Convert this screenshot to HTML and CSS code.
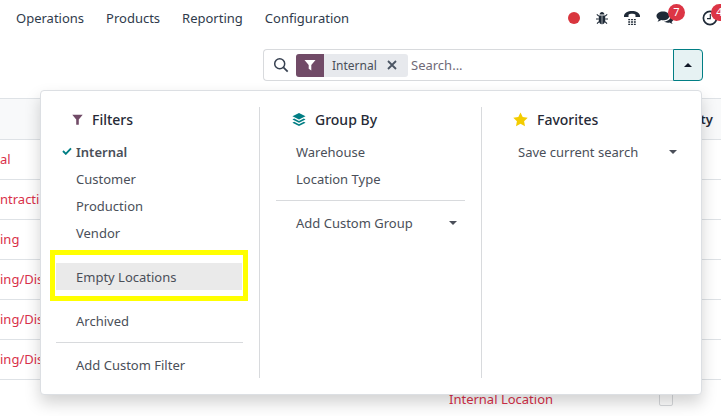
FILE: index.html
```html
<!DOCTYPE html>
<html lang="en">
<head>
<meta charset="utf-8">
<title>Locations</title>
<link rel="stylesheet" href="styles.css">
</head>
<body>
<header class="topbar">
  <nav class="menu">
    <a class="menu-item">Operations</a>
    <a class="menu-item">Products</a>
    <a class="menu-item">Reporting</a>
    <a class="menu-item">Configuration</a>
  </nav>
  <div class="systray">
    <span class="rec-dot"></span>
    <svg class="tray-icon bug" viewBox="0 0 14 14"><path d="M4.6 3.6C4.7 2 5.7 1 7 1s2.3 1 2.4 2.600z" fill="#1f2a37"/><path d="M3.800 4.400h6.400v5c0 2.200-1.400 3.800-3.200 3.800S3.800 11.600 3.800 9.400z" fill="#1f2a37"/><path d="M7 4.400v8.800" stroke="#fff" stroke-width=".6"/><path d="M3.800 5.200 1.800 3.400M10.200 5.200l2-1.800M3.800 8H1M10.200 8H13M4 10.600l-2 2M10 10.600l2 2" stroke="#1f2a37" stroke-width="1.100" fill="none"/></svg>
    <svg class="tray-icon phone" viewBox="0 0 18 17"><path d="M.5 6C1 3 4.500 1 9 1s8 2 8.500 5v1.500h-4.800V5C12 4.300 10.500 4 9 4s-3 .3-3.700 1v2.500H.5z" fill="#1f2a37"/><path d="M5 9.500h2V11H5zM8 9.500h2V11H8zM11 9.500h2V11h-2zM5 12h2v1.500H5zM8 12h2v1.500H8zM11 12h2v1.500h-2zM5 14.500h2V16H5zM8 14.500h2V16H8zM11 14.500h2V16h-2z" fill="#1f2a37"/></svg>
    <span class="tray-badged">
      <svg class="tray-icon comments" viewBox="0 0 18 16"><path d="M7 1.500c3.600 0 6.300 1.900 6.300 4.400S10.600 10.300 7 10.300c-.6 0-1.200 0-1.800-.2C4.200 11 3 11.500 1.500 11.700c.7-.8 1.100-1.500 1.200-2.400C1.300 8.400.5 7.200.5 5.900.5 3.400 3.400 1.500 7 1.500z" fill="#1f2a37"/><path d="M14.500 5c1.900.8 3 2.200 3 3.800 0 1.200-.7 2.300-1.900 3.100.2.800.5 1.400 1.100 2-1.300-.2-2.400-.6-3.300-1.300-.5.100-1 .2-1.500.2-1.500 0-2.900-.5-3.800-1.200 3.700-.1 6.500-2.400 6.500-5.300z" fill="#1f2a37"/></svg>
      <span class="badge badge-msg">7</span>
    </span>
    <span class="tray-badged">
      <svg class="tray-icon clock" viewBox="0 0 16 16"><circle cx="8" cy="8" r="6.600" fill="none" stroke="#1f2a37" stroke-width="1.700"/><path d="M8.300 4v4.600H5" fill="none" stroke="#1f2a37" stroke-width="1.100"/></svg>
      <span class="badge badge-act">4</span>
    </span>
  </div>
</header>

<section class="control-panel">
  <div class="search-group">
    <div class="search-box">
      <svg class="search-icon" viewBox="0 0 16 16"><circle cx="6.700" cy="6.700" r="5" fill="none" stroke="#374151" stroke-width="1.500"/><path d="m10.400 10.400 4.300 4.300" stroke="#374151" stroke-width="1.700"/></svg>
      <span class="facet">
        <span class="facet-icon"><svg viewBox="0 0 12 12"><path d="M.5 1h11L7.300 6v5.500L4.700 9.800V6z" fill="#fff"/></svg></span>
        <span class="facet-label">Internal</span>
        <svg class="facet-close" viewBox="0 0 10 10"><path d="m1 1 8 8M9 1 1 9" stroke="#4b5563" stroke-width="1.800"/></svg>
      </span>
      <span class="search-input">Search...</span>
    </div>
    <button class="toggle"><span class="caret-up"></span></button>
  </div>
</section>

<section class="table">
  <div class="row head"><span class="cell-end">ty</span></div>
  <div class="row"><span>al</span></div>
  <div class="row"><span>ntracting</span></div>
  <div class="row"><span>ing</span></div>
  <div class="row"><span>ing/Dispatch</span></div>
  <div class="row"><span>ing/Dispatch</span></div>
  <div class="row"><span>ing/Dispatch</span></div>
  <div class="row last"><span>Internal Location</span><i class="check"></i></div>
</section>

<div class="dropdown">
  <div class="col">
    <div class="col-title">
      <svg class="title-icon filter" viewBox="0 0 12 12"><path d="M.3.800h11.400L7.400 6v5.600H4.600V6z" fill="#714b67"/></svg>
      <span>Filters</span>
    </div>
    <div class="item selected"><svg class="tick" viewBox="0 0 10 8"><path d="m1 4 2.800 2.800L9 1.300" fill="none" stroke="#017e84" stroke-width="1.900"/></svg>Internal</div>
    <div class="item">Customer</div>
    <div class="item">Production</div>
    <div class="item">Vendor</div>
    <hr class="sep">
    <div class="item hover">Empty Locations</div>
    <hr class="sep">
    <div class="item">Archived</div>
    <hr class="sep">
    <div class="item">Add Custom Filter</div>
  </div>
  <div class="col">
    <div class="col-title">
      <svg class="title-icon layers" viewBox="0 0 15 15"><path d="M7.500.5 14.500 4 7.500 7.500.5 4z" fill="#017e84"/><path d="M2.300 6.400 7.500 9l5.200-2.600 1.800 1-7 3.500-7-3.500z" fill="#017e84"/><path d="M2.300 9.900l5.200 2.600 5.200-2.600 1.800 1-7 3.500-7-3.500z" fill="#017e84"/></svg>
      <span>Group By</span>
    </div>
    <div class="item">Warehouse</div>
    <div class="item">Location Type</div>
    <hr class="sep">
    <div class="item split">Add Custom Group<span class="caret-down"></span></div>
  </div>
  <div class="col">
    <div class="col-title">
      <svg class="title-icon star" viewBox="0 0 15 15"><path d="m7.500.4 2.200 4.600 5 .7-3.600 3.500.9 5L7.500 11.800 3 14.200l.9-5L.3 5.700l5-.7z" fill="#f3cc00"/></svg>
      <span>Favorites</span>
    </div>
    <div class="item split">Save current search<span class="caret-down"></span></div>
  </div>
</div>

<div class="highlight"></div>
</body>
</html>
```

FILE: styles.css
```css
* { box-sizing: border-box; }

html, body {
  margin: 0;
  height: 416px;
  overflow: hidden;
  background: #fff;
}

body {
  width: 721px;
  font-family: "Noto Sans", sans-serif;
  font-size: 13px;
  color: #4a4f59;
}

.topbar {
  height: 36px;
  display: flex;
  align-items: center;
  justify-content: space-between;
}

.menu {
  display: flex;
  gap: 22px;
  padding-left: 16px;
}

.menu-item { color: #2f3b4c; }

.systray {
  display: flex;
  align-items: center;
  width: 153px;
  flex: none;
}

.rec-dot {
  width: 12px;
  height: 12px;
  border-radius: 50%;
  background: #d9363e;
  flex: none;
  margin-right: 15px;
}

.tray-icon { display: block; flex: none; }
.bug { width: 14px; height: 14px; margin-right: 14px; }
.phone { width: 18px; height: 16px; margin-right: 15px; }

.tray-badged { position: relative; display: block; flex: none; }
.comments { width: 18px; height: 16px; margin-right: 28px; }
.clock { width: 16px; height: 16px; }

.badge {
  position: absolute;
  width: 17px;
  height: 17px;
  border-radius: 50%;
  background: #dc3545;
  color: #fff;
  font-size: 11px;
  line-height: 16px;
  text-align: center;
}

.badge-msg { left: 12px; top: -6px; }
.badge-act { left: 9px; top: -6px; }

.control-panel {
  height: 62px;
  padding: 13px 18px 0 263px;
}

.search-group {
  display: flex;
  height: 32px;
  width: 440px;
}

.search-box {
  flex: 1;
  display: flex;
  align-items: center;
  border: 1px solid #d8dadd;
  border-right: 0;
  border-radius: 4px 0 0 4px;
  padding-left: 9px;
}

.search-icon { width: 16px; height: 16px; margin-right: 7px; flex: none; }

.facet {
  display: flex;
  align-items: center;
  height: 23px;
  width: 112px;
  flex: none;
  background: #e7e9ed;
  border-radius: 3px;
  overflow: hidden;
}

.facet-icon {
  width: 28px;
  height: 23px;
  background: #714b67;
  display: flex;
  align-items: center;
  justify-content: center;
}

.facet-icon svg { width: 12px; height: 12px; }

.facet-label { margin-left: 8px; color: #4a4f59; font-size: 12px; }
.facet-close { width: 10px; height: 10px; margin-left: 10px; }

.search-input { margin-left: 3px; color: #6f6a78; }

.toggle {
  width: 30px;
  height: 32px;
  padding: 0;
  background: #e6f2f3;
  border: 1px solid #017e84;
  border-radius: 0 4px 4px 0;
  display: flex;
  align-items: center;
  justify-content: center;
}

.caret-up {
  border-left: 4px solid transparent;
  border-right: 4px solid transparent;
  border-bottom: 4px solid #111827;
}

.table { border-top: 1px solid #dee2e6; }

.row {
  height: 40px;
  display: flex;
  align-items: center;
  color: #d9304a;
  border-bottom: 1px solid #dee2e6;
  padding-bottom: 2px;
}

.head {
  height: 41px;
  background: #f8f9fa;
  justify-content: flex-end;
  color: #262a36;
  font-weight: 600;
  padding-right: 8px;
  padding-bottom: 0;
}

.last { padding-left: 449px; padding-right: 48px; }

.check {
  width: 14px;
  height: 14px;
  margin-left: auto;
  border: 1px solid #d8dadd;
  border-radius: 2px;
}

.dropdown {
  position: absolute;
  left: 40px;
  top: 90px;
  width: 662px;
  height: 305px;
  padding: 17px 0 16px;
  background: #fff;
  border: 1px solid #dcdfe3;
  border-radius: 4px;
  box-shadow: 0 8px 16px rgba(0, 0, 0, .175);
  display: grid;
  grid-template-columns: 219px 222px 1fr;
}

.col {
  padding: 0 16px;
  border-right: 1px solid #d8dadd;
  margin-top: -1px;
}

.col:first-child { padding-left: 15px; }
.col:last-child { border-right: 0; }

.col-title {
  height: 31.400px;
  display: flex;
  align-items: center;
  padding: 0 16px 7px;
  font-size: 14px;
  font-weight: 500;
  color: #262a36;
  gap: 9px;
}

.title-icon { flex: none; }
.filter { width: 11px; height: 11px; }
.layers { width: 14px; height: 15px; }
.star { width: 15px; height: 15px; margin-left: -1px; }

.item {
  position: relative;
  height: 27px;
  line-height: 27px;
  padding: 1px 0 0 20px;
}

.selected { font-weight: 600; }

.tick {
  position: absolute;
  left: 6px;
  top: 9px;
  width: 10px;
  height: 8px;
}

.hover { background: #eaeaea; margin-right: 1px; }

.split {
  display: flex;
  align-items: center;
  justify-content: space-between;
  padding-top: 2px;
  padding-right: 8px;
}

.caret-down {
  border-left: 4px solid transparent;
  border-right: 4px solid transparent;
  border-top: 4px solid #4a4f59;
  margin-bottom: 2px;
}

.sep {
  height: 1px;
  margin: 8px 0;
  border: 0;
  background: #d8dadd;
}

.highlight {
  position: absolute;
  left: 50px;
  top: 250px;
  width: 198px;
  height: 51px;
  border: 5px solid #ffff00;
}
```
